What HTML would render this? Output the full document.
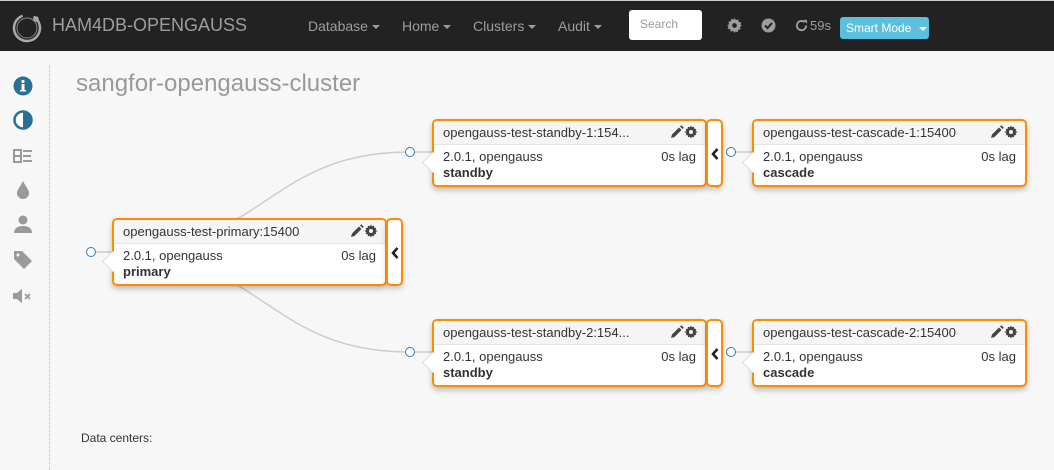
<!DOCTYPE html>
<html><head><meta charset="utf-8"><style>
*{box-sizing:border-box;margin:0;padding:0}
body{width:1054px;height:470px;overflow:hidden;background:#f7f7f7;font-family:"Liberation Sans",sans-serif;position:relative}
.nav{position:absolute;left:0;top:0;width:1054px;height:51px;background:#222;border-top:1px solid #ccc}
.nav span{position:absolute;color:#9d9d9d;font-size:14px;top:17px;white-space:nowrap}
.brand{left:52px;font-size:18px!important;top:14px!important;color:#9d9d9d}
.caret{display:inline-block;border-top:4px solid #9d9d9d;border-left:4px solid transparent;border-right:4px solid transparent;vertical-align:middle;margin-left:4px}
.search{position:absolute;left:629px;top:9px;width:73px;height:30px;background:#fff;border-radius:3px;color:#999;font-size:12px;padding:7px 11px}
.smart{position:absolute;left:840px;top:16px;width:89px;height:22px;background:#5bc0de;border-radius:3px;color:#fff;font-size:12px;padding:4px 6px;white-space:nowrap}
.title{position:absolute;left:76px;top:70px;font-size:24px;color:#999}
.vline{position:absolute;left:49px;top:65px;height:405px;border-left:1px dotted #bbb}
.card{position:absolute;width:275px;height:68px;background:#fff;border:2px solid #ff8c00;border-radius:5px;box-shadow:0 3px 6px rgba(0,0,0,.25);font-size:13px;color:#333}
.card .h{height:24px;background:#f5f5f5;border-bottom:1px solid #e5e5e5;padding:4px 9px;border-radius:3px 3px 0 0;position:relative;white-space:nowrap}
.card .ic{position:absolute;right:7px;top:4px}
.card .b{padding:4px 9px;line-height:16px;position:relative}
.card .b .lag{position:absolute;right:9px;top:4px}
.card .b b{font-weight:bold}
.card:before{content:"";position:absolute;left:-9px;top:34px;width:14px;height:14px;background:#fff;transform:rotate(45deg);border-left:1px solid #ddd;border-bottom:1px solid #ddd}
.tab{position:absolute;width:17px;height:68px;background:#fff;border:2px solid #ff8c00;border-radius:5px;box-shadow:0 3px 6px rgba(0,0,0,.2)}
.tab svg{position:absolute;left:3px;top:27px}
.dot{position:absolute;width:10px;height:10px;border:1.5px solid #337ab7;border-radius:50%;background:#fff}
.side{position:absolute;left:13px;width:20px;height:20px}
</style></head><body>
<div class="nav">
<svg style="position:absolute;left:11px;top:11px" width="32" height="32" viewBox="0 0 32 32"><circle cx="16" cy="16" r="13" fill="none" stroke="#aaa" stroke-width="2.5" stroke-dasharray="70 12" transform="rotate(-60 16 16)"/><circle cx="16" cy="16" r="10" fill="none" stroke="#888" stroke-width="1"/><circle cx="25" cy="7" r="2" fill="none" stroke="#aaa" stroke-width="1.5"/></svg>
<span class="brand">HAM4DB-OPENGAUSS</span>
<span style="left:308px">Database<i class="caret"></i></span>
<span style="left:402px">Home<i class="caret"></i></span>
<span style="left:473px">Clusters<i class="caret"></i></span>
<span style="left:558px">Audit<i class="caret"></i></span>
<div class="search">Search</div>
<svg style="position:absolute;left:727px;top:17px" width="15" height="15" viewBox="0 0 16 16"><path d="M8 0l1.5 2.3 2.6-.8.4 2.7 2.7.4-.8 2.6L16 8l-2.3 1.5.8 2.6-2.7.4-.4 2.7-2.6-.8L8 16l-1.5-2.3-2.6.8-.4-2.7-2.7-.4.8-2.6L0 8l2.3-1.5-.8-2.6 2.7-.4.4-2.7 2.6.8z" fill="#9d9d9d"/><circle cx="8" cy="8" r="2.5" fill="#222"/></svg>
<svg style="position:absolute;left:761px;top:17px" width="15" height="15"><circle cx="7.5" cy="7.5" r="7" fill="#9d9d9d"/><path d="M4 7.5l2.5 2.5 4.5-5" stroke="#222" stroke-width="2" fill="none"/></svg>
<svg style="position:absolute;left:795px;top:18px" width="13" height="13" viewBox="0 0 14 14"><path d="M12 7a5 5 0 1 1-1.5-3.5" stroke="#9d9d9d" stroke-width="2" fill="none"/><path d="M9 1h4v4z" fill="#9d9d9d"/></svg>
<span style="left:810px;top:17px;font-size:13px">59s</span>
<div class="smart">Smart Mode <i class="caret" style="border-top-color:#fff"></i></div>
</div>
<svg class="side" style="top:76px" viewBox="0 0 20 20"><circle cx="10" cy="10" r="9.5" fill="#2a6f96"/><rect x="8.5" y="8" width="3" height="7" fill="#fff"/><rect x="7" y="14" width="6" height="1.5" fill="#fff"/><circle cx="10" cy="5.5" r="1.6" fill="#fff"/></svg>
<svg class="side" style="top:110px" viewBox="0 0 20 20"><circle cx="10" cy="10" r="8.5" fill="#fff" stroke="#2a6f96" stroke-width="2.5"/><path d="M10 1.5a8.5 8.5 0 0 1 0 17z" fill="#2a6f96"/></svg>
<svg class="side" style="top:146px" viewBox="0 0 20 20"><rect x="1" y="4" width="7" height="12" fill="none" stroke="#999" stroke-width="2"/><path d="M1 10h7M10 5h9M10 10h8M10 15h9" stroke="#999" stroke-width="2"/></svg>
<svg class="side" style="top:180px" viewBox="0 0 20 20"><path d="M10 1C7 7 4 10 4 13a6 6 0 0 0 12 0c0-3-3-6-6-12z" fill="#999"/></svg>
<svg class="side" style="top:214px" viewBox="0 0 20 20"><circle cx="10" cy="6" r="4.5" fill="#999"/><path d="M1 19c0-5 4-7 9-7s9 2 9 7z" fill="#999"/></svg>
<svg class="side" style="top:250px" viewBox="0 0 20 20"><path d="M1 1h8l10 10-8 8L1 9z" fill="#999"/><circle cx="5" cy="5" r="1.5" fill="#f7f7f7"/></svg>
<svg class="side" style="top:286px" viewBox="0 0 20 20"><path d="M0 7h4l5-4v14l-5-4H0z" fill="#999"/><path d="M12 8l5 5M17 8l-5 5" stroke="#999" stroke-width="1.6"/></svg>
<div class="vline"></div>
<div class="title">sangfor-opengauss-cluster</div>
<svg style="position:absolute;left:0;top:0" width="1054" height="470"><path d="M110 252C265 252 265 152 410 152M110 252C265 252 265 352 410 352M96 252H112M415 152H433M415 352H433M736 152H752M736 352H752" stroke="#ccc" stroke-width="1.5" fill="none"/></svg>
<div class="dot" style="left:86px;top:247px"></div>
<div class="dot" style="left:405px;top:147px"></div>
<div class="dot" style="left:405px;top:347px"></div>
<div class="dot" style="left:726px;top:147px"></div>
<div class="dot" style="left:726px;top:347px"></div>
<svg width="0" height="0" style="position:absolute"><defs>
<symbol id="ic" viewBox="0 0 28 14"><path d="M1 13l1-3.5 7-7 2.5 2.5-7 7z" fill="#444"/><path d="M10 1.5l1.3-1.3 2.5 2.5-1.3 1.3z" fill="#444"/><path d="M21 0.5l1 1.8 2-.6.3 2 2 .3-.6 2L27.5 7l-1.8 1 .6 2-2 .3-.3 2-2-.6-1 1.8-1-1.8-2 .6-.3-2-2-.3.6-2L14.5 7l1.8-1-.6-2 2-.3.3-2 2 .6z" fill="#444"/><circle cx="21" cy="7" r="2" fill="#f5f5f5"/></symbol>
<symbol id="chev" viewBox="0 0 8 12"><path d="M6.5 1L2 6l4.5 5" stroke="#222" stroke-width="2.6" fill="none"/></symbol>
</defs></svg>
<div class="card" style="left:112px;top:218px"><div class="h">opengauss-test-primary:15400<svg class="ic" width="28" height="14"><use href="#ic"/></svg></div><div class="b">2.0.1, opengauss<span class="lag">0s lag</span><br><b>primary</b></div></div>
<div class="tab" style="left:386px;top:218px"><svg width="8" height="12"><use href="#chev"/></svg></div>
<div class="card" style="left:432px;top:119px"><div class="h">opengauss-test-standby-1:154...<svg class="ic" width="28" height="14"><use href="#ic"/></svg></div><div class="b">2.0.1, opengauss<span class="lag">0s lag</span><br><b>standby</b></div></div>
<div class="tab" style="left:706px;top:119px"><svg width="8" height="12"><use href="#chev"/></svg></div>
<div class="card" style="left:432px;top:319px"><div class="h">opengauss-test-standby-2:154...<svg class="ic" width="28" height="14"><use href="#ic"/></svg></div><div class="b">2.0.1, opengauss<span class="lag">0s lag</span><br><b>standby</b></div></div>
<div class="tab" style="left:706px;top:319px"><svg width="8" height="12"><use href="#chev"/></svg></div>
<div class="card" style="left:752px;top:119px"><div class="h">opengauss-test-cascade-1:15400<svg class="ic" width="28" height="14"><use href="#ic"/></svg></div><div class="b">2.0.1, opengauss<span class="lag">0s lag</span><br><b>cascade</b></div></div>
<div class="card" style="left:752px;top:319px"><div class="h">opengauss-test-cascade-2:15400<svg class="ic" width="28" height="14"><use href="#ic"/></svg></div><div class="b">2.0.1, opengauss<span class="lag">0s lag</span><br><b>cascade</b></div></div>
<div style="position:absolute;left:81px;top:431px;font-size:12px;color:#333">Data centers:</div>
</body></html>
